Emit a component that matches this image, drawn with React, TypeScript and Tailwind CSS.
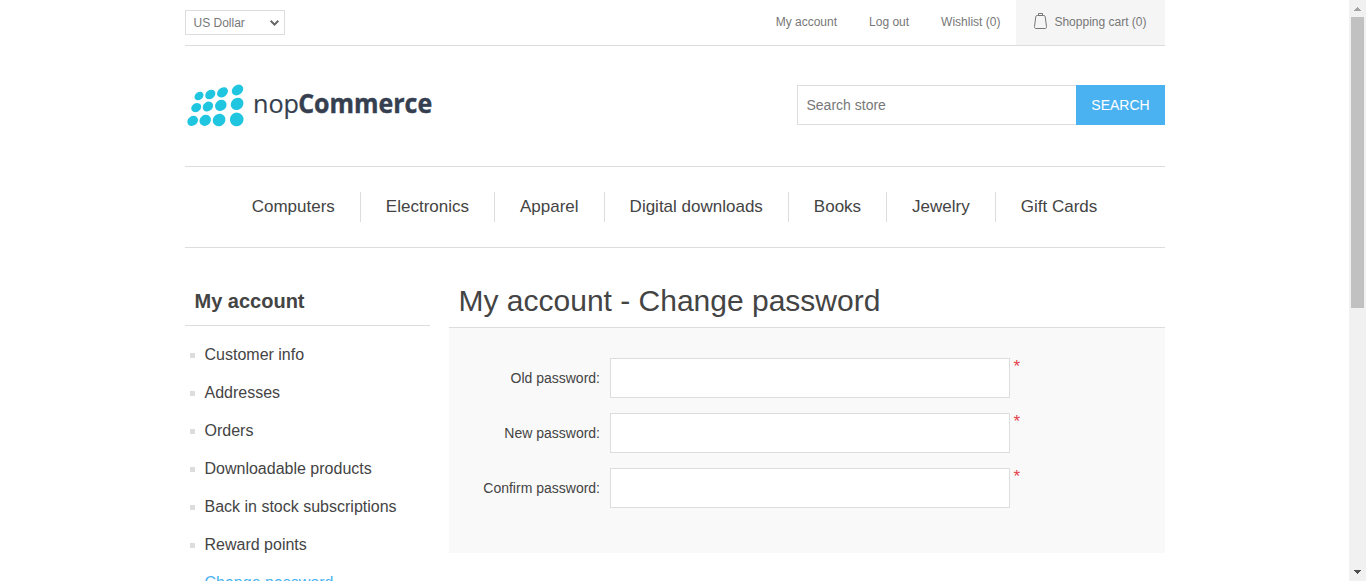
const topLinks = ["My account", "Log out", "Wishlist (0)"];
const categories = ["Computers", "Electronics", "Apparel", "Digital downloads", "Books", "Jewelry", "Gift Cards"];
const accountLinks = [
  "Customer info",
  "Addresses",
  "Orders",
  "Downloadable products",
  "Back in stock subscriptions",
  "Reward points",
  "Change password",
];
const fields = ["Old password:", "New password:", "Confirm password:"];

// cx, cy, rx, ry of each logo dot
const dots = [
  [10.5, 11, 4.9, 3.8],
  [21.8, 9.5, 5.5, 4.3],
  [34, 7.4, 6, 4.5],
  [49, 5, 6.2, 4.9],
  [7.7, 22.6, 5.3, 4.3],
  [19.4, 21.5, 5.5, 4.6],
  [32.3, 20.4, 6.1, 5.3],
  [48.6, 18.9, 6.6, 5.9],
  [4.2, 35.9, 5.7, 4.7],
  [16.7, 35.4, 6, 5.3],
  [30.6, 35, 6.6, 6],
  [48.2, 34.4, 6.9, 6.7],
];

function Logo() {
  return (
    <svg width="260" height="50" viewBox="0 0 260 50" className="block overflow-visible" aria-label="nopCommerce">
      <g fill="#20c5e0" transform="translate(3.5 5)">
        {dots.map(([x, y, rx, ry], i) => (
          <ellipse key={i} cx={x} cy={y} rx={rx} ry={ry} transform={`rotate(-38 ${x} ${y})`} />
        ))}
      </g>
      <g fill="#353f50" stroke="#353f50" className="font-['Open_Sans',sans-serif]" fontSize="26">
        <text x="68" y="32.6" strokeWidth="0.2" textLength="46" lengthAdjust="spacingAndGlyphs">nop</text>
        <text x="113.2" y="32.6" strokeWidth="0.4" fontWeight="700" textLength="134" lengthAdjust="spacingAndGlyphs">Commerce</text>
      </g>
    </svg>
  );
}

function Header() {
  return (
    <header>
      <div className="flex h-[46px] items-start justify-between border-b border-[#ddd] text-xs text-[#777]">
        <div className="mt-[10px] flex h-[25px] w-[100px] items-center justify-between border border-[#ddd] pl-2 pr-[5px]">
          <span>US Dollar</span>
          <svg width="9" height="6" viewBox="0 0 9 6" fill="none" stroke="#666" strokeWidth="2">
            <path d="M0.7 0.8 4.5 4.6 8.3 0.8" />
          </svg>
        </div>
        <nav className="flex h-[45px] items-center leading-[45px]">
          {topLinks.map((l) => (
            <a key={l} className="px-4">{l}</a>
          ))}
          <a className="flex h-[45px] items-center gap-[7px] bg-[#f5f5f5] px-[18px]">
            <svg width="13" height="17" viewBox="0 0 13 17" fill="none" stroke="#777" className="mb-[3px]">
              <path d="M3.2 2.5h6.6c.8 0 1.300.4 1.400 1.200L12.500 13.600c.1 1.300-.4 1.900-1.500 1.900H2c-1.100 0-1.600-.6-1.500-1.900L1.800 3.700c.1-.8.6-1.200 1.400-1.200ZM4.500 2.500V.5h4v2" />
            </svg>
            Shopping cart (0)
          </a>
        </nav>
      </div>
      <div className="flex h-[120px] items-center justify-between pb-[2px]">
        <Logo />
        <div className="flex h-10 text-sm">
          <div className="w-[279px] border border-r-0 border-[#ddd] pl-[9px] leading-[38px] text-[#777]">Search store</div>
          <button className="w-[89px] bg-[#4ab2f1] pl-px text-white">SEARCH</button>
        </div>
      </div>
    </header>
  );
}

export default function App() {
  return (
    <div className="flex h-screen overflow-hidden bg-white font-['Liberation_Sans',Arial,sans-serif] text-[#444]">
      <div className="min-w-0 flex-1">
        <div className="mx-auto w-[980px]">
          <Header />
          <nav className="flex h-[82px] items-center justify-center border-y border-[#ddd] text-[17px] leading-[30px]">
            {categories.map((c) => (
              <a key={c} className="border-r border-[#ddd] px-[25px] last:border-r-0">{c}</a>
            ))}
          </nav>
          <div className="flex justify-between">
            <aside className="w-[245px] pt-[27px]">
              <h2 className="h-[51px] border-b border-[#ddd] pl-[10px] text-xl font-bold leading-[52px]">My account</h2>
              <ul className="pt-[10px]">
                {accountLinks.map((l, i) => (
                  <li key={l} className="flex h-[38px] items-center pl-[5px]">
                    <span className={i === 6 ? "h-[5px] w-[5px]" : "h-[5px] w-[5px] bg-[#ddd]"} />
                    <a className={i === 6 ? "pl-[10px] text-[#4ab2f1]" : "pl-[10px]"}>{l}</a>
                  </li>
                ))}
              </ul>
            </aside>
            <main className="w-[716px] pt-[27px]">
              <h1 className="h-[53px] border-b border-[#ddd] pl-[10px] text-[30px] leading-[52px]">My account - Change password</h1>
              <form className="flex h-[225px] flex-col gap-[15px] bg-[#f9f9f9] pt-[30px] text-sm">
                {fields.map((f) => (
                  <div key={f} className="flex h-10">
                    <label className="w-[161px] pr-[9.5px] text-right leading-10">{f}</label>
                    <input type="password" className="h-10 w-[400px] border border-[#ddd] bg-white outline-none" />
                    <span className="ml-1 text-[17px] leading-[17px] text-[#e4434b]">*</span>
                  </div>
                ))}
              </form>
            </main>
          </div>
        </div>
      </div>
      <div className="flex w-[17px] flex-col items-center bg-[#f1f1f1]">
        <svg width="17" height="17" viewBox="0 0 17 17" className="shrink-0" fill="#a3a3a3" shapeRendering="crispEdges">
          <path d="M8 7h1v1H8zM7 8h3v1H7zM6 9h5v1H6zM5 10h7v1H5z" />
        </svg>
        <div className="h-[291px] w-[13px] bg-[#c1c1c1]" />
        <svg width="17" height="17" viewBox="0 0 17 17" className="mt-auto shrink-0" fill="#505050" shapeRendering="crispEdges">
          <path d="M5 6h7v1H5zM6 7h5v1H6zM7 8h3v1H7zM8 9h1v1H8z" />
        </svg>
      </div>
    </div>
  );
}
